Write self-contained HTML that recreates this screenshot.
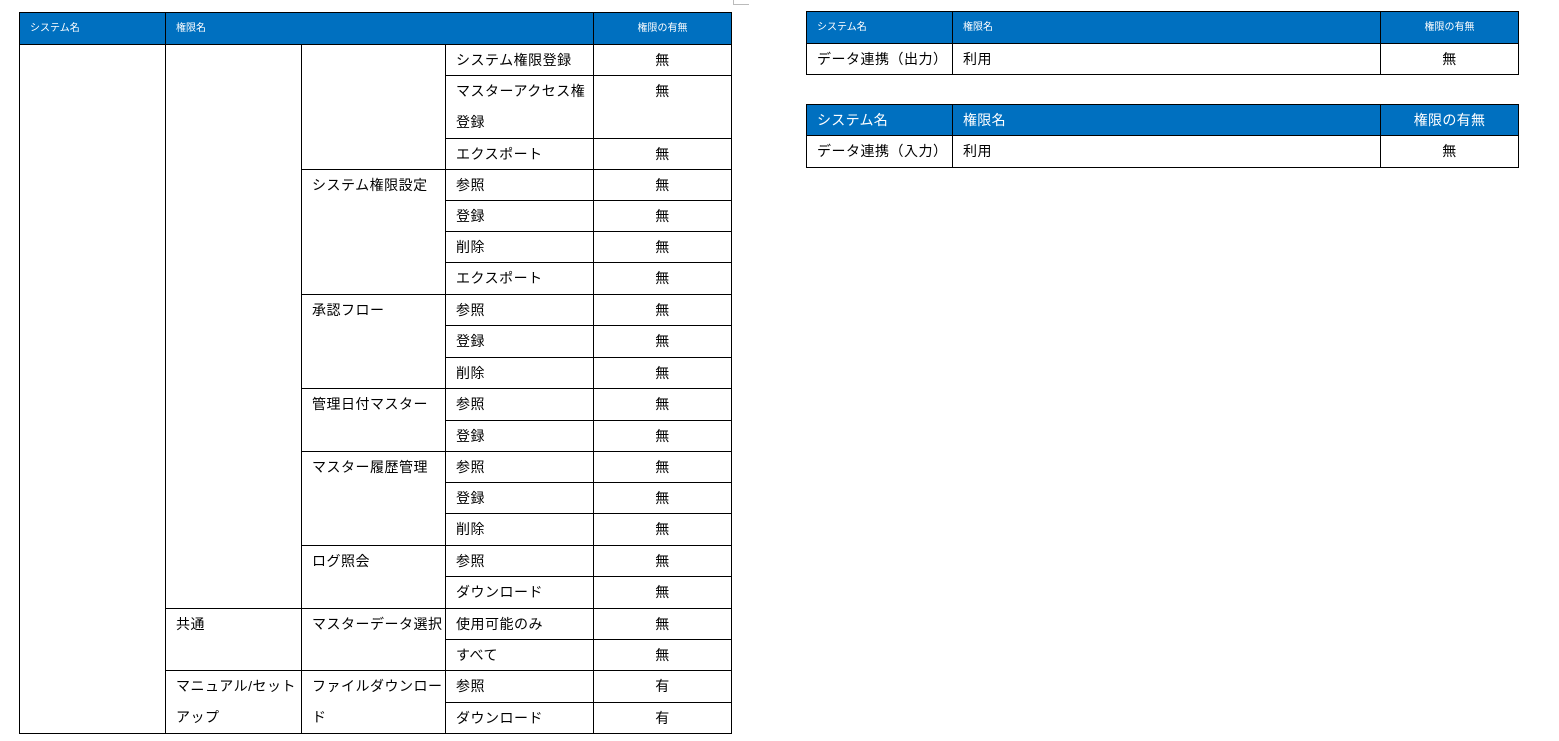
<!DOCTYPE html>
<html><head><meta charset="utf-8"><style>
body{margin:0;background:#fff;width:1559px;height:741px;position:relative;overflow:hidden;font-family:"Liberation Sans","Noto Sans CJK JP",sans-serif;color:#000}
div.k{position:absolute;box-sizing:border-box;border:1px solid #000;padding:0 0 0 10px;font-size:14px;letter-spacing:0.5px;line-height:31px;overflow:hidden;white-space:nowrap}
div.c{text-align:center;padding:0}
div.h{background:#0070c0;color:#fff;font-size:10px;letter-spacing:0;line-height:31px}
div.hb{font-size:14px;letter-spacing:0.3px;line-height:30px}
</style></head><body>
<div style="position:absolute;left:733px;top:4px;width:16px;height:1px;background:#bbb"></div>
<div style="position:absolute;left:733px;top:0;width:1px;height:5px;background:#bbb"></div>

<div class="k h" style="left:19px;top:12px;width:147px;height:33px">システム名</div>
<div class="k h" style="left:165px;top:12px;width:429px;height:33px">権限名</div>
<div class="k h c" style="left:593px;top:12px;width:139px;height:33px">権限の有無</div>

<div class="k" style="left:19px;top:44px;width:147px;height:690px"></div>
<div class="k" style="left:165px;top:44px;width:137px;height:565px"></div>
<div class="k" style="left:301px;top:44px;width:145px;height:126px"></div>
<div class="k" style="left:445px;top:44px;width:149px;height:32px">システム権限登録</div>
<div class="k c" style="left:593px;top:44px;width:139px;height:32px">無</div>
<div class="k" style="left:445px;top:75px;width:149px;height:64px">マスターアクセス権<br>登録</div>
<div class="k c" style="left:593px;top:75px;width:139px;height:64px">無</div>
<div class="k" style="left:445px;top:138px;width:149px;height:32px">エクスポート</div>
<div class="k c" style="left:593px;top:138px;width:139px;height:32px">無</div>

<div class="k" style="left:301px;top:169px;width:145px;height:126px">システム権限設定</div>
<div class="k" style="left:445px;top:169px;width:149px;height:32px">参照</div><div class="k c" style="left:593px;top:169px;width:139px;height:32px">無</div>
<div class="k" style="left:445px;top:200px;width:149px;height:32px">登録</div><div class="k c" style="left:593px;top:200px;width:139px;height:32px">無</div>
<div class="k" style="left:445px;top:231px;width:149px;height:32px">削除</div><div class="k c" style="left:593px;top:231px;width:139px;height:32px">無</div>
<div class="k" style="left:445px;top:262px;width:149px;height:33px">エクスポート</div><div class="k c" style="left:593px;top:262px;width:139px;height:33px">無</div>

<div class="k" style="left:301px;top:294px;width:145px;height:95px">承認フロー</div>
<div class="k" style="left:445px;top:294px;width:149px;height:32px">参照</div><div class="k c" style="left:593px;top:294px;width:139px;height:32px">無</div>
<div class="k" style="left:445px;top:325px;width:149px;height:33px">登録</div><div class="k c" style="left:593px;top:325px;width:139px;height:33px">無</div>
<div class="k" style="left:445px;top:357px;width:149px;height:32px">削除</div><div class="k c" style="left:593px;top:357px;width:139px;height:32px">無</div>

<div class="k" style="left:301px;top:388px;width:145px;height:64px">管理日付マスター</div>
<div class="k" style="left:445px;top:388px;width:149px;height:33px">参照</div><div class="k c" style="left:593px;top:388px;width:139px;height:33px">無</div>
<div class="k" style="left:445px;top:420px;width:149px;height:32px">登録</div><div class="k c" style="left:593px;top:420px;width:139px;height:32px">無</div>

<div class="k" style="left:301px;top:451px;width:145px;height:95px">マスター履歴管理</div>
<div class="k" style="left:445px;top:451px;width:149px;height:32px">参照</div><div class="k c" style="left:593px;top:451px;width:139px;height:32px">無</div>
<div class="k" style="left:445px;top:482px;width:149px;height:32px">登録</div><div class="k c" style="left:593px;top:482px;width:139px;height:32px">無</div>
<div class="k" style="left:445px;top:513px;width:149px;height:33px">削除</div><div class="k c" style="left:593px;top:513px;width:139px;height:33px">無</div>

<div class="k" style="left:301px;top:545px;width:145px;height:64px">ログ照会</div>
<div class="k" style="left:445px;top:545px;width:149px;height:32px">参照</div><div class="k c" style="left:593px;top:545px;width:139px;height:32px">無</div>
<div class="k" style="left:445px;top:576px;width:149px;height:33px">ダウンロード</div><div class="k c" style="left:593px;top:576px;width:139px;height:33px">無</div>

<div class="k" style="left:165px;top:608px;width:137px;height:63px">共通</div>
<div class="k" style="left:301px;top:608px;width:145px;height:63px">マスターデータ選択</div>
<div class="k" style="left:445px;top:608px;width:149px;height:32px">使用可能のみ</div><div class="k c" style="left:593px;top:608px;width:139px;height:32px">無</div>
<div class="k" style="left:445px;top:639px;width:149px;height:32px">すべて</div><div class="k c" style="left:593px;top:639px;width:139px;height:32px">無</div>

<div class="k" style="left:165px;top:670px;width:137px;height:64px">マニュアル/セット<br>アップ</div>
<div class="k" style="left:301px;top:670px;width:145px;height:64px">ファイルダウンロー<br>ド</div>
<div class="k" style="left:445px;top:670px;width:149px;height:33px">参照</div><div class="k c" style="left:593px;top:670px;width:139px;height:33px">有</div>
<div class="k" style="left:445px;top:702px;width:149px;height:32px">ダウンロード</div><div class="k c" style="left:593px;top:702px;width:139px;height:32px">有</div>

<div class="k h" style="left:806px;top:11px;width:147px;height:33px">システム名</div>
<div class="k h" style="left:952px;top:11px;width:429px;height:33px">権限名</div>
<div class="k h c" style="left:1380px;top:11px;width:139px;height:33px">権限の有無</div>
<div class="k" style="left:806px;top:43px;width:147px;height:32px">データ連携（出力）</div>
<div class="k" style="left:952px;top:43px;width:429px;height:32px">利用</div>
<div class="k c" style="left:1380px;top:43px;width:139px;height:32px">無</div>

<div class="k h hb" style="left:806px;top:104px;width:147px;height:32px">システム名</div>
<div class="k h hb" style="left:952px;top:104px;width:429px;height:32px">権限名</div>
<div class="k h hb c" style="left:1380px;top:104px;width:139px;height:32px">権限の有無</div>
<div class="k" style="left:806px;top:135px;width:147px;height:33px">データ連携（入力）</div>
<div class="k" style="left:952px;top:135px;width:429px;height:33px">利用</div>
<div class="k c" style="left:1380px;top:135px;width:139px;height:33px">無</div>
</body></html>
